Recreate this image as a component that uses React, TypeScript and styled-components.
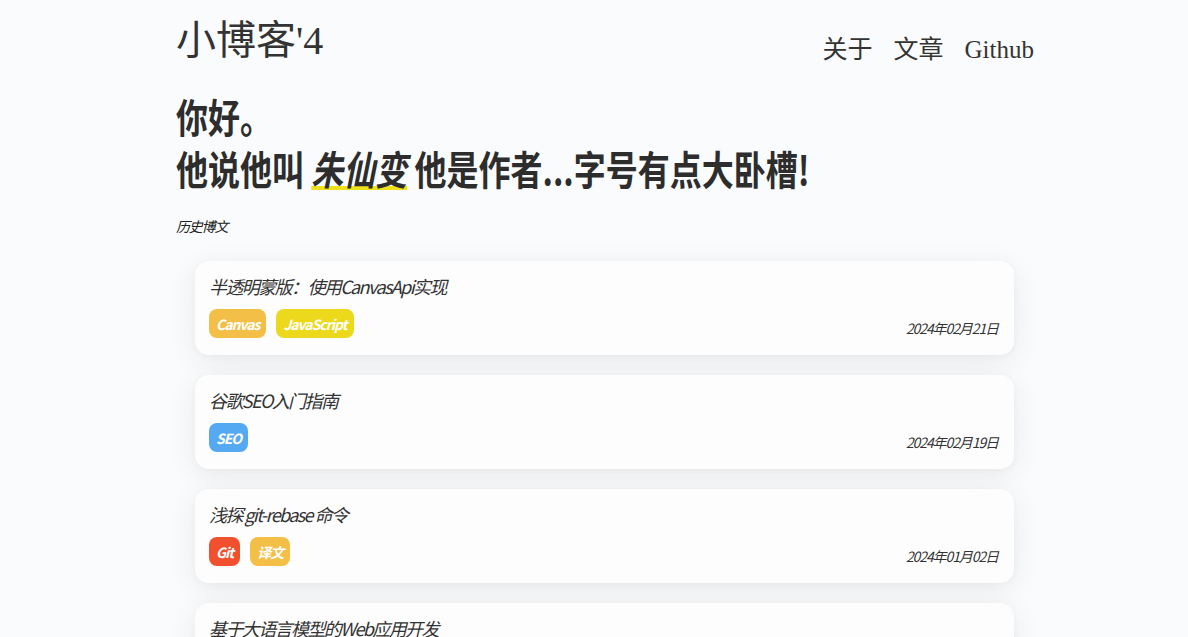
import styled, { createGlobalStyle } from "styled-components";

interface Tag {
    name: string;
    color: string;
}

interface Post {
    id: number;
    title: string;
    date: string;
    tags: Tag[];
}

const GlobalStyle = createGlobalStyle`
    html, body {
        margin: 0;
        padding: 0;
        background: #fafbfc;
        color: #333;
        font-family: "Noto Sans CJK SC", "Noto Sans", sans-serif;
    }
`

const Page = styled.div`
    width: 880px;
    margin: 0 auto;
    padding: 16px 0 40px 22px;
    box-sizing: border-box;
`

const Header = styled.header`
    display: flex;
    justify-content: space-between;
    align-items: flex-start;
`

const SiteTitle = styled.h1`
    margin: 0;
    font-family: "Liberation Serif", "Noto Sans CJK SC", serif;
    font-weight: 400;
    font-size: 40px;
    line-height: 50px;
    color: #333;
`

const Nav = styled.nav`
    display: flex;
    gap: 21px;
    margin-top: 17px;
`

const NavLink = styled.a`
    font-family: "Liberation Serif", "Noto Sans CJK SC", serif;
    font-size: 25px;
    line-height: 34px;
    color: #333;
    text-decoration: none;
`

const Hero = styled.div`
    margin-top: 23px;
    font-size: 40px;
    font-weight: 700;
    line-height: 52px;
    color: #2d2d2d;
    transform: scaleX(0.8);
    transform-origin: left center;
    white-space: nowrap;
`

const Name = styled.span`
    font-style: italic;
    text-decoration: underline;
    text-decoration-color: #eee21c;
    text-decoration-thickness: 4px;
    text-underline-offset: 1px;
`

const SectionLabel = styled.div`
    margin-top: 22px;
    font-size: 14px;
    line-height: 20px;
    font-style: italic;
    letter-spacing: -1.2px;
    color: #222;
`

const PostList = styled.ul`
    list-style: none;
    margin: 25px 0 0;
    padding: 0 20px 0 19px;
    display: flex;
    flex-direction: column;
    gap: 20px;
`

const Card = styled.li`
    background: #fdfdfe;
    border-radius: 14px;
    padding: 11px 16px 17px 14px;
    box-shadow: 0 6px 30px rgba(0, 0, 0, 0.07), 0 2px 8px rgba(0, 0, 0, 0.03);
`

const PostTitle = styled.div`
    font-size: 18px;
    line-height: 28px;
    font-style: italic;
    letter-spacing: -1.6px;
    color: #333;
    margin-bottom: 9px;
`

const CardFooter = styled.div`
    display: flex;
    justify-content: space-between;
    align-items: flex-end;
`

const TagRow = styled.div`
    display: flex;
    gap: 10px;
`

const TagBadge = styled.span<{ $color: string }>`
    display: inline-flex;
    align-items: center;
    height: 29px;
    padding: 0 7px;
    border-radius: 8px;
    background: ${props => props.$color};
    color: #fff;
    font-size: 14px;
    font-weight: 700;
    font-style: italic;
    letter-spacing: -1px;
`

const PostDate = styled.span`
    font-size: 14px;
    line-height: 20px;
    font-style: italic;
    letter-spacing: -1.1px;
    color: #333;
`

const posts: Post[] = [
    {
        id: 1,
        title: "半透明蒙版：使用CanvasApi实现",
        date: "2024年02月21日",
        tags: [{ name: "Canvas", color: "#f4bf47" }, { name: "JavaScript", color: "#ecd91c" }],
    },
    {
        id: 2,
        title: "谷歌SEO入门指南",
        date: "2024年02月19日",
        tags: [{ name: "SEO", color: "#55a8f2" }],
    },
    {
        id: 3,
        title: "浅探 git-rebase 命令",
        date: "2024年01月02日",
        tags: [{ name: "Git", color: "#f1502f" }, { name: "译文", color: "#f4bf47" }],
    },
    {
        id: 4,
        title: "基于大语言模型的Web应用开发",
        date: "2023年12月18日",
        tags: [{ name: "AI", color: "#55a8f2" }],
    },
];

export default function App() {
    return <>
        <GlobalStyle />
        <Page>
            <Header>
                <SiteTitle>小博客'4</SiteTitle>
                <Nav>
                    <NavLink href="#">关于</NavLink>
                    <NavLink href="#">文章</NavLink>
                    <NavLink href="#">Github</NavLink>
                </Nav>
            </Header>
            <Hero>
                <div>你好。</div>
                <div>他说他叫 <Name>朱仙变</Name> 他是作者...字号有点大卧槽!</div>
            </Hero>
            <SectionLabel>历史博文</SectionLabel>
            <PostList>
                {posts.map(post => <Card key={post.id}>
                    <PostTitle>{post.title}</PostTitle>
                    <CardFooter>
                        <TagRow>
                            {post.tags.map(tag => <TagBadge key={tag.name} $color={tag.color}>{tag.name}</TagBadge>)}
                        </TagRow>
                        <PostDate>{post.date}</PostDate>
                    </CardFooter>
                </Card>)}
            </PostList>
        </Page>
    </>;
}
